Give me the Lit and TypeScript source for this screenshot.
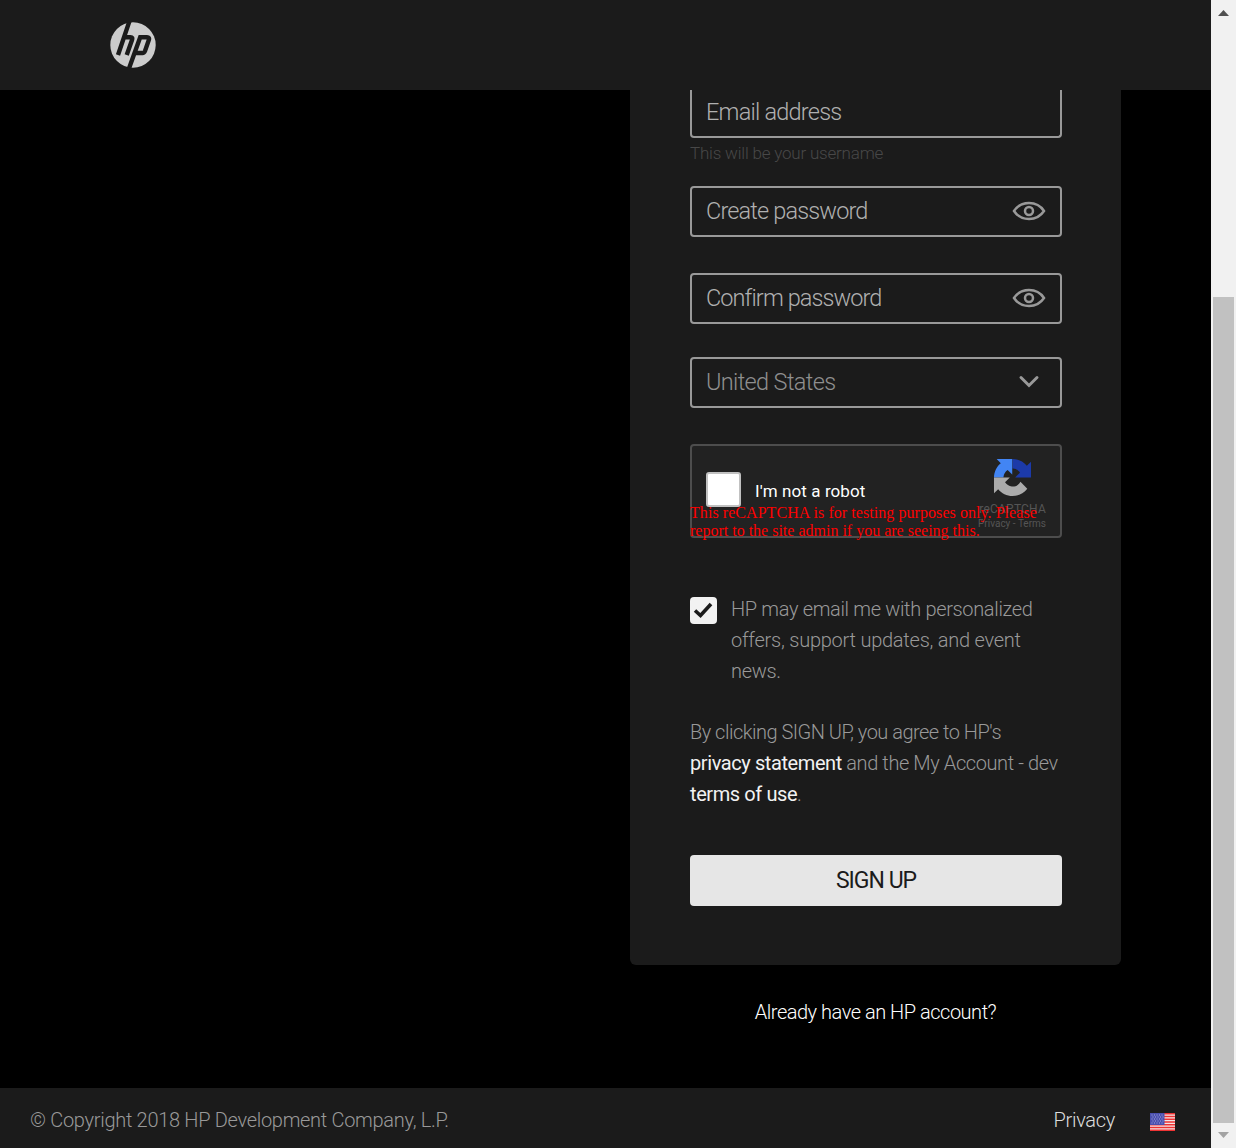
import { LitElement, html, css, svg } from "lit";
import { customElement } from "lit/decorators.js";

const eye = svg`<svg class="eye" viewBox="0 0 34 20" width="34" height="20">
  <path d="M2 10C9-.6 25-.6 32 10C25 20.6 9 20.6 2 10Z" /><circle cx="17" cy="10" r="4" />
</svg>`;

const arrow =
  "M64 31.96c0-.46-.01-.92-.03-1.37V4.61l-7.18 7.18C50.9 4.59 41.96 0 31.95 0 21.53 0 12.28 4.97 6.44 12.67l11.77 11.9a15.6 15.6 0 0 1 4.77-5.35c2.05-1.6 4.96-2.91 8.98-2.91.48 0 .86.06 1.13.16 4.98.39 9.3 3.14 11.84 7.13l-8.33 8.33L64 31.96";

@customElement("app-root")
export class AppRoot extends LitElement {
  static styles = css`
    :host { display: grid; grid-template-columns: 1fr 25px; height: 1148px; overflow: hidden; background: #000;
      font-family: Roboto, "Liberation Sans", sans-serif; font-weight: 300; color: #999; }
    * { box-sizing: border-box; }
    .page { display: flex; flex-direction: column; }
    header { height: 90px; background: #1b1b1b; padding: 22px 110px; }
    header svg { display: block; }
    main { flex: 1; display: flex; flex-direction: column; align-items: flex-end; padding-right: 90px; }
    .card { width: 491px; height: 875px; padding: 0 59px 0 60px; background: #1b1b1b; border-radius: 0 0 6px 6px; }
    .t { white-space: nowrap; }
    .field { display: flex; align-items: center; justify-content: space-between; height: 51px; border: 2px solid #999;
      border-radius: 4px; padding: 0 14px 2px; font-size: 23.5px; color: #b0b0b0; }
    .email { height: 48px; border-top: 0; border-radius: 0 0 4px 4px; }
    .email-t { letter-spacing: -0.77px; }
    .create-t { letter-spacing: -0.85px; }
    .confirm-t { letter-spacing: -0.91px; }
    .country-t { letter-spacing: -0.65px; }
    .hint { height: 48px; padding-top: 5px; line-height: 20px; font-size: 17px; letter-spacing: -0.2px; color: #484848; }
    .confirm { margin-top: 36px; }
    .country { margin-top: 33px; color: #8f8f8f; padding-right: 20px; }
    .eye, .chev { fill: none; stroke: #999; stroke-width: 2.5; }
    .chev { stroke-width: 3; stroke-linecap: round; }
    .captcha { position: relative; margin-top: 36px; height: 94px; border: 2px solid #4d4d4d; border-radius: 4px;
      background: #222; display: flex; justify-content: space-between; padding: 0 14px 0 14px; }
    .robot { display: flex; gap: 14px; padding-top: 26px; font-size: 17px; font-weight: 400; letter-spacing: 0.1px;
      color: #fff; line-height: 38px; }
    .box { width: 35px; height: 35px; background: #fff; border: 2px solid #c1c1c1; border-radius: 3px; }
    .brand { display: flex; flex-direction: column; align-items: flex-end; color: #555; font-weight: 400; padding-top: 13px; }
    .brand svg { margin-right: 15px; }
    .name { font-size: 12px; line-height: 14px; margin-top: 6px; letter-spacing: 0.2px; }
    .links { font-size: 10px; line-height: 12px; margin-top: 2px; }
    .warning { position: absolute; left: -2px; top: 58px; font: 16px/18px "Liberation Serif", serif; color: #f00; }
    .w1 { letter-spacing: 0.06px; }
    .consent { display: flex; gap: 14px; margin-top: 56px; font-size: 20px; line-height: 31px; }
    .c1 { letter-spacing: -0.34px; }
    .c2 { letter-spacing: -0.24px; }
    .c3 { letter-spacing: -0.3px; }
    .check { width: 27px; height: 27px; margin-top: 3px; background: #f2f2f2; border-radius: 4px; }
    .check svg { display: block; }
    .legal { margin-top: 30px; font-size: 20px; line-height: 31px; letter-spacing: -0.41px; }
    .l1 { letter-spacing: -0.51px; }
    .legal b { font-weight: 400; color: #f2f2f2; }
    .signup { display: flex; align-items: center; justify-content: center; width: 372px; height: 51px; margin-top: 45px; border: 0;
      border-radius: 4px; background: #e6e6e6; color: #1b1b1b; font: 400 23px Roboto, sans-serif; letter-spacing: -1px;
      padding-bottom: 2px; }
    .already { width: 491px; text-align: center; padding-top: 32px; font-size: 20px; line-height: 31px; letter-spacing: -0.48px;
      color: #fff; }
    footer { display: flex; align-items: center; height: 60px; background: #1b1b1b; padding: 4px 36px 0 30px; font-size: 20px;
      letter-spacing: -0.3px; }
    .flag { margin-top: 4px; }
    .privacy { margin-left: auto; margin-right: 35px; color: #ddd; }
    .bar { display: flex; flex-direction: column; align-items: center; background: #f1f1f1; padding: 10px 0; }
    .thumb { width: 21px; height: 826px; background: #c1c1c1; margin-top: 281px; margin-bottom: 9px; }
  `;

  render() {
    return html`
      <div class="page">
        <header>
          <svg width="46" height="46" viewBox="0 0 46 46">
            <circle cx="23" cy="23" r="22.7" fill="#ccc" />
            <g fill="none" stroke="#1b1b1b" stroke-width="4.4">
              <path d="M19.5 -1L8 33M14 15.2H20.5Q23 15.2 22 18L16.7 33" />
              <path d="M18.8 47L30.2 15.2H37Q39.8 15.2 38.8 18L35 29Q34.2 31 32.5 31H25" />
            </g>
          </svg>
        </header>
        <main>
          <section class="card">
            <div class="field email"><span class="t email-t">Email address</span></div>
            <div class="hint"><span class="t">This will be your username</span></div>
            <div class="field"><span class="t create-t">Create password</span>${eye}</div>
            <div class="field confirm"><span class="t confirm-t">Confirm password</span>${eye}</div>
            <div class="field country">
              <span class="t country-t">United States</span>
              <svg class="chev" width="22" height="14" viewBox="0 0 22 14"><path d="M3 2.5L11 10.5L19 2.5" /></svg>
            </div>
            <div class="captcha">
              <div class="robot"><div class="box"></div><span class="t">I'm not a robot</span></div>
              <div class="brand">
                <svg width="37" height="37" viewBox="0 0 64 64">
                  <clipPath id="right"><path d="M32 0H64V64H32Z" /></clipPath>
                  <clipPath id="corner"><path d="M0 0H32V32H0Z" /></clipPath>
                  <g clip-path="url(#right)"><path fill="#1c3aa9" d=${arrow} /></g>
                  <g clip-path="url(#corner)"><path fill="#4285f4" transform="rotate(-90 32 32)" d=${arrow} /></g>
                  <path fill="#ababab" transform="rotate(180 32 32)" d=${arrow} />
                </svg>
                <span class="t name">reCAPTCHA</span><span class="t links">Privacy - Terms</span>
              </div>
              <div class="warning">
                <span class="t w1">This reCAPTCHA is for testing purposes only. Please</span><br />
                <span class="t">report to the site admin if you are seeing this.</span>
              </div>
            </div>
            <div class="consent">
              <div class="check">
                <svg width="27" height="27" viewBox="0 0 27 27">
                  <path d="M5 13.5L10.5 18.5L21 7" fill="none" stroke="#1b1b1b" stroke-width="3.6" />
                </svg>
              </div>
              <div>
                <span class="t c1">HP may email me with personalized</span><br />
                <span class="t c2">offers, support updates, and event</span><br />
                <span class="t c3">news.</span>
              </div>
            </div>
            <div class="legal">
              <span class="t l1">By clicking SIGN UP, you agree to HP's</span><br />
              <b class="t">privacy statement</b><span class="t"> and the My Account - dev</span><br />
              <b class="t">terms of use</b>.
            </div>
            <button class="signup">SIGN UP</button>
          </section>
          <div class="already">Already have an HP account?</div>
        </main>
        <footer>
          <span class="t">© Copyright 2018 HP Development Company, L.P.</span>
          <span class="t privacy">Privacy</span>
          <svg class="flag" width="25" height="18" viewBox="0 0 25 18">
            <path fill="#f4e4e4" d="M0 0H25V18H0Z" />
            <path stroke="#e33" stroke-width="1.5" d="M0 .7H25M0 3.5H25M0 6.2H25M0 9H25M0 11.8H25M0 14.5H25M0 17.3H25" />
            <path fill="#4a4fae" d="M0 0H14.5V12H0Z" />
            <path stroke="#a5a8de" stroke-width="1" stroke-dasharray="1 1.5" d="M1.5 2H13.5M2.5 4H13.5M1.5 6H13.5M2.5 8H13.5M1.5 10H13.5" />
          </svg>
        </footer>
      </div>
      <div class="bar">
        <svg width="11" height="6"><path fill="#505050" d="M0 6L5.5 0L11 6Z" /></svg>
        <div class="thumb"></div>
        <svg width="11" height="6"><path fill="#a3a3a3" d="M0 0L5.5 6L11 0Z" /></svg>
      </div>
    `;
  }
}
